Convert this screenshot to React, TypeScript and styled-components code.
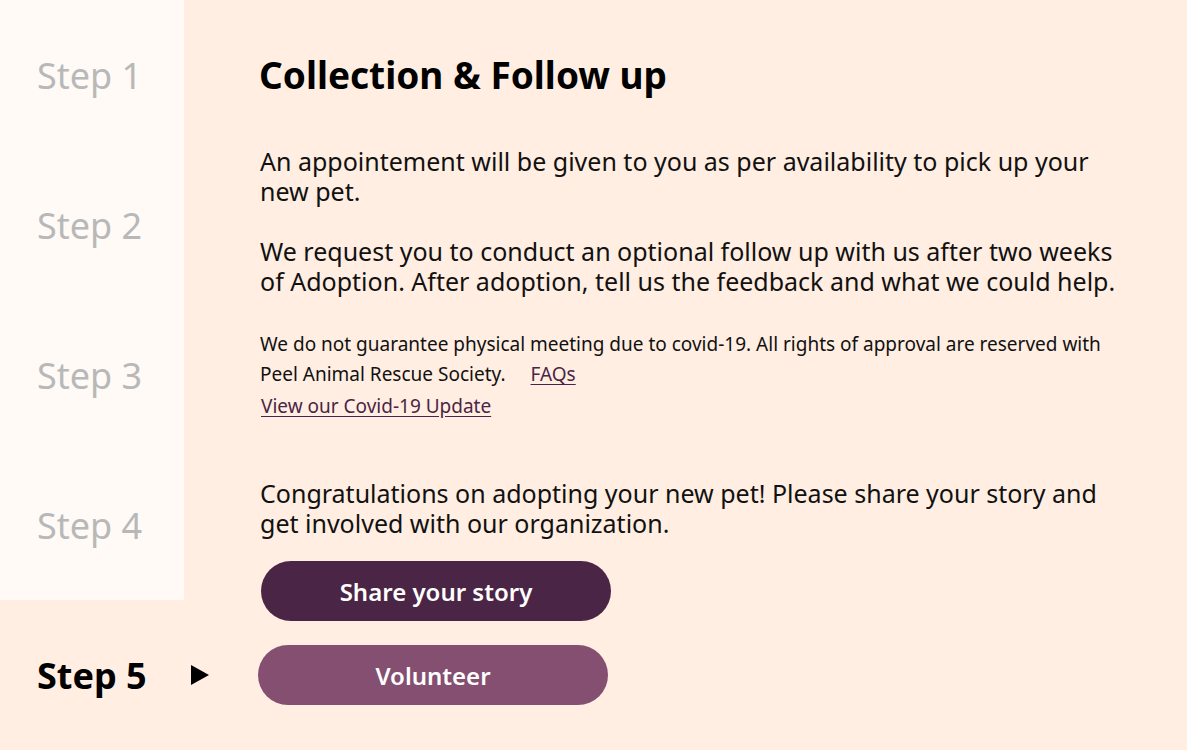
import React from "react";
import styled, { createGlobalStyle } from "styled-components";

const GlobalStyle = createGlobalStyle`
  html, body { margin: 0; padding: 0; }
  body {
    background: #ffeee1;
    font-family: "Noto Sans", "Open Sans", sans-serif;
    color: #111;
  }
`;

const Page = styled.div`
  display: flex;
  width: 1187px;
  height: 750px;
  background: #ffeee1;
  overflow: hidden;
`;

const Sidebar = styled.nav`
  display: flex;
  flex-direction: column;
  width: 184px;
  flex-shrink: 0;
`;

const StepList = styled.div`
  display: flex;
  flex-direction: column;
  background: #fffaf6;
  height: 600px;
`;

const StepItem = styled.div<{ $active?: boolean }>`
  display: flex;
  align-items: center;
  gap: 44px;
  height: 150px;
  padding-left: 37px;
  font-size: 36px;
  font-weight: ${(p) => (p.$active ? 700 : 400)};
  color: ${(p) => (p.$active ? "#000" : "#b8b8b8")};
  white-space: nowrap;
`;

const Arrow = styled.svg`
  width: 18px;
  height: 20px;
  flex-shrink: 0;
`;

const Main = styled.main`
  display: flex;
  flex-direction: column;
  align-items: flex-start;
  padding: 53px 0 0 76px;
  flex: 1;
`;

const Title = styled.h1`
  margin: 0 0 0 -1px;
  font-size: 37px;
  line-height: 44px;
  font-weight: 700;
  color: #000;
`;

const Paragraph = styled.p<{ $gap: number }>`
  margin: ${(p) => p.$gap}px 0 0;
  font-size: 25px;
  line-height: 30px;
  max-width: 866px;
`;

const Note = styled.p`
  margin: 33px 0 0;
  font-size: 19px;
  line-height: 30px;
  max-width: 866px;
`;

const Link = styled.a<{ $block?: boolean }>`
  color: #4b2545;
  text-decoration: underline;
  text-underline-offset: 3px;
  font-size: 19px;
  line-height: 30px;
  display: ${(p) => (p.$block ? "block" : "inline")};
  margin: ${(p) => (p.$block ? "2px 0 0 1px" : "0 0 0 25px")};
`;

const Button = styled.button<{ $tone: "dark" | "light"; $shift?: number }>`
  margin: ${(p) => (p.$tone === "dark" ? "23px" : "24px")} 0 0
    ${(p) => p.$shift ?? 0}px;
  width: 350px;
  height: 60px;
  border: none;
  border-radius: 30px;
  background: ${(p) => (p.$tone === "dark" ? "#4b2545" : "#854f71")};
  color: #fff;
  font-family: "Noto Sans", "Open Sans", sans-serif;
  font-size: 24px;
  font-weight: 600;
  cursor: pointer;
`;

export default function App() {
  return (
    <>
      <GlobalStyle />
      <Page>
        <Sidebar>
          <StepList>
            <StepItem>Step 1</StepItem>
            <StepItem>Step 2</StepItem>
            <StepItem>Step 3</StepItem>
            <StepItem>Step 4</StepItem>
          </StepList>
          <StepItem $active>
            Step 5
            <Arrow viewBox="0 0 18 20">
              <polygon points="0,0 18,10 0,20" fill="#000" />
            </Arrow>
          </StepItem>
        </Sidebar>
        <Main>
          <Title>Collection &amp; Follow up</Title>
          <Paragraph $gap={49}>
            An appointement will be given to you as per availability to pick up
            your new pet.
          </Paragraph>
          <Paragraph $gap={30}>
            We request you to conduct an optional follow up with us after two
            weeks of Adoption. After adoption, tell us the feedback and what we
            could help.
          </Paragraph>
          <Note>
            We do not guarantee physical meeting due to covid-19. All rights of
            approval are reserved with Peel Animal Rescue Society.
            <Link href="#">FAQs</Link>
          </Note>
          <Link href="#" $block>
            View our Covid-19 Update
          </Link>
          <Paragraph $gap={57}>
            Congratulations on adopting your new pet! Please share your story
            and get involved with our organization.
          </Paragraph>
          <Button $tone="dark" $shift={1}>Share your story</Button>
          <Button $tone="light" $shift={-2}>Volunteer</Button>
        </Main>
      </Page>
    </>
  );
}
